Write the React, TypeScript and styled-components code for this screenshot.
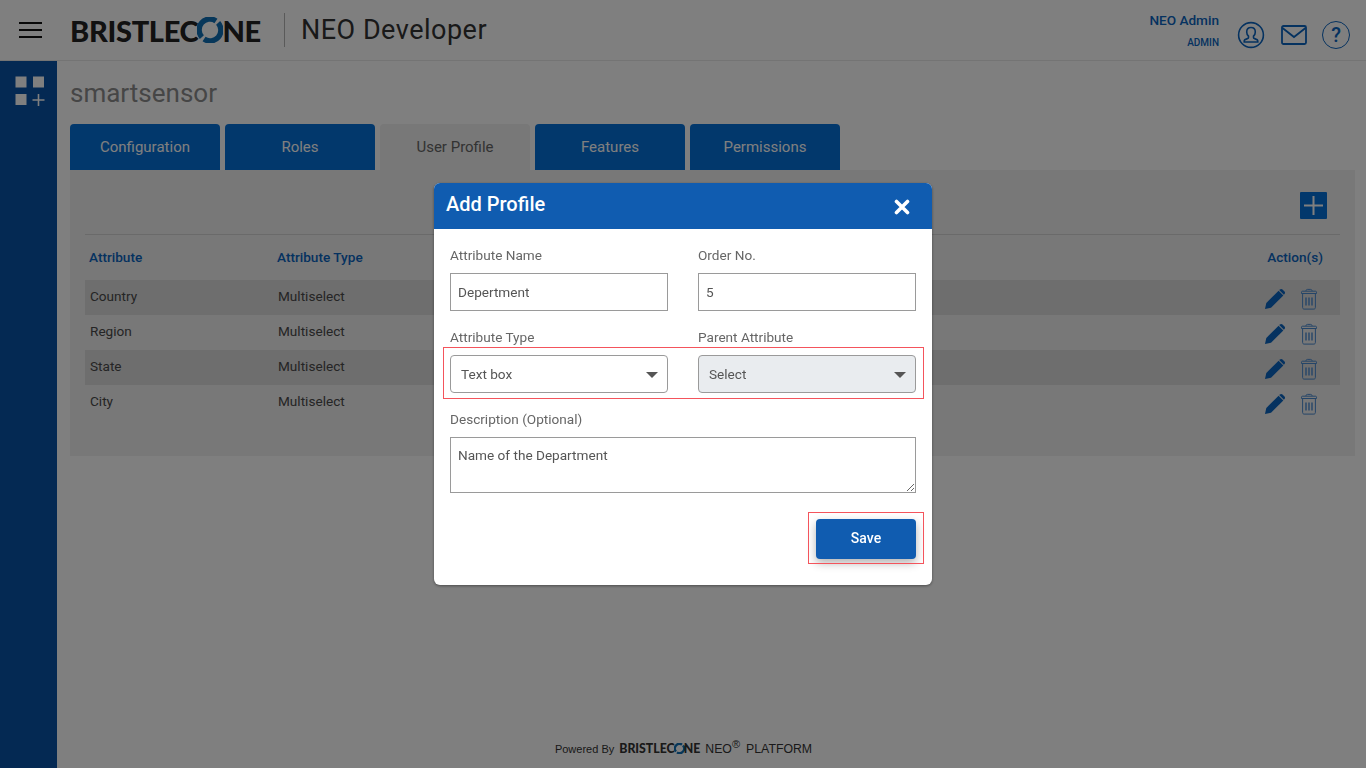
import React from 'react';
import styled, { createGlobalStyle } from 'styled-components';

const GlobalStyle = createGlobalStyle`
  html, body { margin: 0; padding: 0; height: 100%; overflow: hidden; }
  body { font-family: Roboto, "Liberation Sans", sans-serif; background: #fff; }
  * { box-sizing: border-box; }
`;

const tabs = ['Configuration', 'Roles', 'User Profile', 'Features', 'Permissions'];
const rows = ['Country', 'Region', 'State', 'City'];

const BLUE = '#0a64c0';
const TAB_BLUE = '#0570d8';

function ConeRing({ size }: { size: number }) {
  return (
    <RingSvg width={size} height={size} viewBox="0 0 24 24" fill="none" stroke="#0f6fb5" strokeWidth="5">
      <path d="M17.5 3.6A10 10 0 0 0 4.5 18.6" />
      <path d="M6.5 20.4A10 10 0 0 0 19.5 5.4" />
    </RingSvg>
  );
}

function PencilIcon() {
  return (
    <svg width="22" height="22" viewBox="0 0 22 22" fill={BLUE}>
      <path d="M1 21l1.3-6L14.6 2.8l4.7 4.7L7 19.7z" />
      <path d="M15.9 1.5c.8-.8 1.9-.8 2.6 0l2 2c.7.7.7 1.8 0 2.6l-.6.6-4.700-4.600z" />
    </svg>
  );
}

function TrashIcon() {
  return (
    <svg width="18" height="22" viewBox="0 0 18 22" fill="none" stroke="#4a8ad0" strokeWidth="1">
      <path d="M6 3V2.800c0-1 .7-1.400 1.500-1.400h3c.8 0 1.500.4 1.500 1.400V3" />
      <path d="M1.500 4.200c0-.6.400-1 1-1h13c.6 0 1 .4 1 1v1.300h-15zM2.600 5.500v14c0 1 .7 1.600 1.500 1.600h9.800c.8 0 1.500-.6 1.500-1.600v-14" />
      <path d="M6 9.500v8M9 9.500v8M12 9.500v8" strokeWidth="1.400" />
    </svg>
  );
}

export default function App() {
  return (
    <>
      <GlobalStyle />
      <Page>
        <Header>
          <Burger aria-label="menu">
            <span />
            <span />
            <span />
          </Burger>
          <Logo>
            BRISTLEC
            <ConeRing size={26} />
            NE
          </Logo>
          <ProductName>NEO Developer</ProductName>
          <UserBlock>
            <UserName>NEO Admin</UserName>
            <UserRole>ADMIN</UserRole>
          </UserBlock>
          <HeaderIcons>
            <svg width="28" height="28" viewBox="0 0 28 28" fill="none" stroke={BLUE} strokeWidth="1.600">
              <circle cx="14" cy="14" r="12.400" />
              <path d="M14 6.500c-2.700 0-4.300 2-4.300 4.500 0 1.800.8 3.300 1.800 4.200v1.200c0 .6-.4 1-1 1.200-1.600.5-3.300 1-3.300 2.400v1h13.600v-1c0-1.400-1.700-1.900-3.300-2.400-.6-.2-1-.6-1-1.200v-1.200c1-.9 1.800-2.400 1.800-4.200 0-2.500-1.600-4.500-4.300-4.500z" />
            </svg>
            <svg width="26" height="20" viewBox="0 0 26 20" fill="none" stroke={BLUE} strokeWidth="1.800">
              <rect x="1" y="1" width="24" height="18" rx="1.500" />
              <path d="M1.500 3l11.500 9 11.500-9" />
            </svg>
            <HelpCircle>?</HelpCircle>
          </HeaderIcons>
        </Header>
        <Body>
          <Sidebar>
            <svg width="30" height="30" viewBox="0 0 30 30" fill="#fff">
              <rect x="0.500" y="0.500" width="11" height="11" />
              <rect x="18" y="0.500" width="11" height="11" />
              <rect x="0.500" y="18" width="11" height="11" />
              <path d="M22.700 18h1.600v5.200h5.200v1.600h-5.200V30h-1.600v-5.200h-5.200v-1.600h5.200z" />
            </svg>
          </Sidebar>
          <Main>
            <Title>smartsensor</Title>
            <TabRow>
              {tabs.map((t) => (
                <Tab key={t} $active={t === 'User Profile'}>
                  {t}
                </Tab>
              ))}
            </TabRow>
            <Panel>
              <PanelBar>
                <AddButton aria-label="add">
                  <svg width="19" height="19" viewBox="0 0 19 19" fill="#fff">
                    <path d="M8.500 0h2v8.500H19v2h-8.500V19h-2v-8.500H0v-2h8.500z" />
                  </svg>
                </AddButton>
              </PanelBar>
              <HeadRow>
                <HeadCell>Attribute</HeadCell>
                <HeadCell>Attribute Type</HeadCell>
                <HeadCell $right>Action(s)</HeadCell>
              </HeadRow>
              {rows.map((r, i) => (
                <Row key={r} $shaded={i % 2 === 0}>
                  <Cell>{r}</Cell>
                  <Cell>Multiselect</Cell>
                  <Actions>
                    <PencilIcon />
                    <TrashIcon />
                  </Actions>
                </Row>
              ))}
            </Panel>
            <Footer>
              <Powered>Powered By</Powered>
              <SmallLogo>
                BRISTLEC
                <ConeRing size={11} />
                NE
              </SmallLogo>
              <Platform>
                NEO<sup>®</sup>
              </Platform>
              <Platform>PLATFORM</Platform>
            </Footer>
          </Main>
        </Body>
      </Page>

      <Overlay>
        <Modal>
          <ModalHeader>
            <ModalTitle>Add Profile</ModalTitle>
            <CloseButton aria-label="close">
              <svg width="16" height="16" viewBox="0 0 16 16" stroke="#fff" strokeWidth="3.600" strokeLinecap="round">
                <path d="M2.500 2.500l11 11M13.500 2.500l-11 11" />
              </svg>
            </CloseButton>
          </ModalHeader>
          <ModalBody>
            <FieldRow>
              <Field>
                <FieldLabel>Attribute Name</FieldLabel>
                <TextInput defaultValue="Depertment" />
              </Field>
              <Field>
                <FieldLabel>Order No.</FieldLabel>
                <TextInput defaultValue="5" />
              </Field>
            </FieldRow>
            <FieldRow $marked>
              <Field>
                <FieldLabel>Attribute Type</FieldLabel>
                <SelectBox>Text box</SelectBox>
              </Field>
              <Field>
                <FieldLabel>Parent Attribute</FieldLabel>
                <SelectBox $disabled>Select</SelectBox>
              </Field>
            </FieldRow>
            <Field>
              <FieldLabel>Description (Optional)</FieldLabel>
              <TextArea defaultValue="Name of the Department" />
            </Field>
            <ModalFooter>
              <SaveButton>Save</SaveButton>
            </ModalFooter>
          </ModalBody>
        </Modal>
      </Overlay>
    </>
  );
}

const Page = styled.div`
  height: 100vh;
  display: flex;
  flex-direction: column;
`;

const Header = styled.header`
  height: 61px;
  flex: none;
  display: flex;
  align-items: center;
  padding: 0 16px 0 19px;
  border-bottom: 1px solid #e8e8e8;
  background: #fff;
`;

const Burger = styled.div`
  width: 23px;
  display: flex;
  flex-direction: column;
  gap: 5px;
  margin-right: 28px;
  span {
    height: 2px;
    background: #111;
  }
`;

const Logo = styled.div`
  display: flex;
  align-items: center;
  width: 215px;
  height: 34px;
  font-family: Lato, sans-serif;
  font-weight: 900;
  font-size: 29px;
  letter-spacing: -0.300px;
  color: #222;
  border-right: 1px solid #b5b5b5;
`;

const RingSvg = styled.svg`
  flex: none;
  margin: 0 -1px;
`;

const ProductName = styled.div`
  margin-left: 16px;
  font-size: 27px;
  color: #333;
  letter-spacing: 0.500px;
`;

const UserBlock = styled.div`
  margin-left: auto;
  display: flex;
  flex-direction: column;
  align-items: flex-end;
`;

const UserName = styled.div`
  font-size: 13.600px;
  font-weight: 500;
  color: ${BLUE};
`;

const UserRole = styled.div`
  font-size: 10px;
  font-weight: 500;
  color: ${BLUE};
  margin-top: 9px;
`;

const HeaderIcons = styled.div`
  display: flex;
  align-items: center;
  gap: 16px;
  margin-left: 18px;
  margin-top: 9px;
`;

const HelpCircle = styled.div`
  width: 28px;
  height: 28px;
  margin-left: -1px;
  border: 1.600px solid ${BLUE};
  border-radius: 50%;
  color: ${BLUE};
  display: flex;
  align-items: center;
  justify-content: center;
  font-size: 20px;
  font-weight: 500;
`;

const Body = styled.div`
  flex: 1;
  display: flex;
  min-height: 0;
`;

const Sidebar = styled.aside`
  width: 57px;
  flex: none;
  padding: 15px 0 0 15px;
  background: #0852a6;
`;

const Main = styled.main`
  flex: 1;
  display: flex;
  flex-direction: column;
  padding: 0 11px 0 13px;
`;

const Title = styled.h1`
  margin: 16px 0 0;
  height: 47px;
  font-size: 26px;
  line-height: 32px;
  font-weight: 400;
  color: #8c8c8c;
`;

const TabRow = styled.div`
  display: flex;
  gap: 5px;
`;

const Tab = styled.div<{ $active?: boolean }>`
  width: 150px;
  height: 46px;
  display: flex;
  align-items: center;
  justify-content: center;
  font-size: 15px;
  border-radius: 4px 4px 0 0;
  font-weight: 400;
  background: ${(p) => (p.$active ? '#f0f0f0' : TAB_BLUE)};
  color: ${(p) => (p.$active ? '#666' : '#fff')};
`;

const Panel = styled.section`
  height: 286px;
  padding: 0 15px;
  background: #f0f0f0;
`;

const PanelBar = styled.div`
  height: 65px;
  display: flex;
  justify-content: flex-end;
  padding: 22px 13px 0 0;
  border-bottom: 1px solid #d4d4d4;
`;

const AddButton = styled.div`
  width: 27px;
  height: 27px;
  display: flex;
  align-items: center;
  justify-content: center;
  background: ${TAB_BLUE};
  border-radius: 1px;
`;

const gridCols = '188px 1fr 120px';

const HeadRow = styled.div`
  height: 45px;
  display: grid;
  grid-template-columns: ${gridCols};
  align-items: center;
  padding: 0 17px 2px 4px;
`;

const HeadCell = styled.div<{ $right?: boolean }>`
  font-size: 13.600px;
  font-weight: 500;
  color: ${BLUE};
  text-align: ${(p) => (p.$right ? 'right' : 'left')};
`;

const Row = styled.div<{ $shaded?: boolean }>`
  height: 35px;
  display: grid;
  grid-template-columns: ${gridCols};
  align-items: center;
  padding: 0 17px 0 5px;
  background: ${(p) => (p.$shaded ? '#dcdcdc' : 'transparent')};
`;

const Cell = styled.div`
  font-size: 13.600px;
  color: #4a4a4a;
  padding-bottom: 4px;
`;

const Actions = styled.div`
  display: flex;
  justify-content: flex-end;
  align-items: center;
  gap: 14px;
  padding: 2px 5px 0 0;
`;

const Footer = styled.footer`
  margin-top: auto;
  height: 40px;
  display: flex;
  align-items: baseline;
  justify-content: center;
  padding: 13px 0 0 0;
  margin-right: 52px;
`;

const Powered = styled.span`
  font-family: "Liberation Sans", sans-serif;
  font-size: 11px;
  color: #333;
  margin-right: 5px;
`;

const SmallLogo = styled.span`
  display: inline-flex;
  align-items: center;
  font-family: Lato, sans-serif;
  font-weight: 900;
  font-size: 12.300px;
  color: #333;
  margin-right: 5px;
`;

const Platform = styled.span`
  font-family: "Liberation Sans", sans-serif;
  font-size: 12.300px;
  color: #333;
  margin-right: 6px;
  sup {
    font-size: 11px;
    line-height: 0;
  }
`;

const Overlay = styled.div`
  position: fixed;
  inset: 0;
  display: flex;
  justify-content: center;
  align-items: flex-start;
  padding-top: 183px;
  background: rgba(0, 0, 0, 0.5);
`;

const Modal = styled.div`
  width: 498px;
  height: 402px;
  background: #fff;
  border-radius: 6px;
  overflow: hidden;
  box-shadow: 0 1px 3px rgba(0, 0, 0, 0.4);
`;

const ModalHeader = styled.div`
  height: 46px;
  display: flex;
  align-items: center;
  justify-content: space-between;
  padding: 0 22px 0 12px;
  background: #105cb0;
`;

const ModalTitle = styled.h2`
  margin: 0 0 4px;
  font-size: 20px;
  line-height: 42px;
  font-weight: 500;
  color: #fff;
`;

const CloseButton = styled.div`
  display: flex;
  margin-top: 2px;
`;

const ModalBody = styled.div`
  padding: 16px 16px 0;
  display: flex;
  flex-direction: column;
  gap: 16px;
`;

const FieldRow = styled.div<{ $marked?: boolean }>`
  position: relative;
  display: grid;
  grid-template-columns: 218px 218px;
  column-gap: 30px;
  ${(p) =>
    p.$marked &&
    `&::after {
      content: '';
      position: absolute;
      left: -7px;
      right: -8px;
      top: 20px;
      bottom: -6px;
      border: 1px solid #f4545c;
      pointer-events: none;
    }`}
`;

const Field = styled.div`
  display: flex;
  flex-direction: column;
`;

const FieldLabel = styled.label`
  height: 28px;
  font-size: 13.600px;
  line-height: 20px;
  color: #666;
`;

const TextInput = styled.input`
  height: 38px;
  padding: 0 7px 1px;
  border: 1px solid #9a9a9a;
  border-radius: 0;
  outline: none;
  font-family: inherit;
  font-size: 13.600px;
  color: #555;
`;

const SelectBox = styled.div<{ $disabled?: boolean }>`
  position: relative;
  height: 38px;
  display: flex;
  align-items: center;
  padding: 0 10px 1px;
  border: 1px solid #9a9a9a;
  border-radius: 4px;
  font-size: 13.600px;
  color: #555;
  background: ${(p) => (p.$disabled ? '#e9ecef' : '#fff')};
  &::after {
    content: '';
    position: absolute;
    right: 9px;
    top: 16px;
    border-left: 6px solid transparent;
    border-right: 6px solid transparent;
    border-top: 6px solid #555;
  }
`;

const TextArea = styled.textarea`
  height: 56px;
  padding: 8px 7px;
  border: 1px solid #9a9a9a;
  border-radius: 0;
  outline: none;
  font-family: inherit;
  font-size: 13.600px;
  line-height: 18px;
  color: #555;
`;

const ModalFooter = styled.div`
  display: flex;
  justify-content: flex-end;
  margin-top: 10px;
`;

const SaveButton = styled.button`
  position: relative;
  width: 100px;
  height: 40px;
  padding: 0 0 2px;
  border: none;
  border-radius: 4px;
  background: #105cb0;
  color: #fff;
  font-family: inherit;
  font-size: 14px;
  font-weight: 500;
  box-shadow: 0 4px 10px rgba(0, 0, 0, 0.3);
  &::after {
    content: '';
    position: absolute;
    left: -8px;
    right: -8px;
    top: -7px;
    bottom: -5px;
    border: 1px solid #f4545c;
  }
`;
